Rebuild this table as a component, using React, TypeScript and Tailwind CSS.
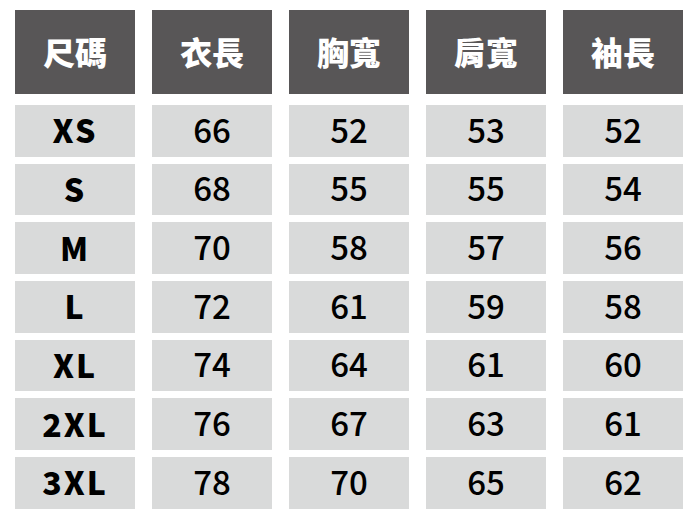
const headers = ["尺碼", "衣長", "胸寬", "肩寬", "袖長"];

const rows: [string, number, number, number, number][] = [
  ["XS", 66, 52, 53, 52],
  ["S", 68, 55, 55, 54],
  ["M", 70, 58, 57, 56],
  ["L", 72, 61, 59, 58],
  ["XL", 74, 64, 61, 60],
  ["2XL", 76, 67, 63, 61],
  ["3XL", 78, 70, 65, 62],
];

const font = { fontFamily: '"Noto Sans CJK TC", "Noto Sans", sans-serif' };

export default function App() {
  return (
    <div className="w-[695px] h-[527px] bg-white pl-[15px] pt-[10px]" style={font}>
      {/* header */}
      <div className="grid grid-cols-[repeat(5,120px)] gap-x-[17px]">
        {headers.map((h) => (
          <div
            key={h}
            className="h-[84px] bg-[#585657] flex items-center justify-center text-white text-[32px] font-black leading-none pb-[2px]"
          >
            {h}
          </div>
        ))}
      </div>

      {/* body */}
      <div className="mt-[11px] grid grid-cols-[repeat(5,120px)] gap-x-[17px] gap-y-[7px]">
        {rows.map((r) =>
          r.map((v, i) =>
            i === 0 ? (
              <div
                key={`${r[0]}-${i}`}
                className="h-[51.67px] bg-[#d9dada] flex items-center justify-center text-black text-[32px] font-black tracking-[2px] leading-none pb-[3px]"
              >
                {v}
              </div>
            ) : (
              <div
                key={`${r[0]}-${i}`}
                className="h-[51.67px] bg-[#d9dada] flex items-center justify-center text-black text-[33px] font-medium leading-none pb-[3px]"
              >
                {v}
              </div>
            )
          )
        )}
      </div>
    </div>
  );
}
